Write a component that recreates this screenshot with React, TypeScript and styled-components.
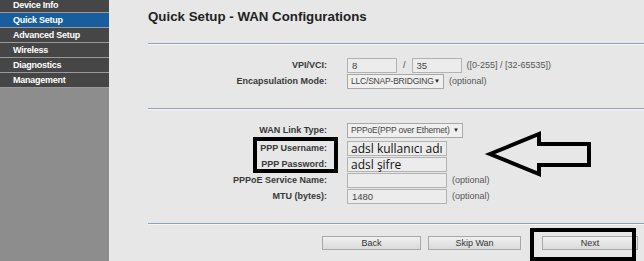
import React from "react";
import styled, { createGlobalStyle } from "styled-components";

const GlobalStyle = createGlobalStyle`
  html, body {
    margin: 0;
    padding: 0;
    background: #e7e7e7;
    font-family: "Liberation Sans", Arial, sans-serif;
  }
`;

const Page = styled.div`
  position: relative;
  display: flex;
  width: 644px;
  height: 261px;
  overflow: hidden;
`;

const Sidebar = styled.nav`
  width: 109px;
  flex-shrink: 0;
  background: #8d8d8d;
`;

const MenuList = styled.div`
  margin-top: -2px;
  display: flex;
  flex-direction: column;
`;

const MenuItem = styled.div<{ $active?: boolean }>`
  height: 14px;
  line-height: 14px;
  padding-left: 13px;
  border-bottom: 1px solid #9b9b9b;
  background: ${(p) => (p.$active ? "#185e9e" : "#464646")};
  color: #ffffff;
  font-size: 9px;
  letter-spacing: -0.25px;
  font-weight: bold;
  white-space: nowrap;
`;

const Main = styled.main`
  flex: 1;
  padding-left: 39px;
`;

const Title = styled.h1`
  margin: 0;
  padding-top: 9px;
  font-size: 13.3px;
  line-height: 16px;
  font-weight: bold;
  color: #222;
`;

const Rule = styled.div<{ $top: number }>`
  margin-top: ${(p) => p.$top}px;
  height: 1px;
  background: #8fa3b7;
  border-bottom: 1px solid #f6f6f6;
`;

const Section = styled.div`
  padding-top: 12px;
  display: grid;
  grid-template-columns: 179px auto;
  column-gap: 20px;
`;

const Label = styled.div<{ $after?: number }>`
  height: 16px;
  margin-bottom: ${(p) => p.$after || 0}px;
  display: flex;
  align-items: center;
  justify-content: flex-end;
  font-size: 9px;
  font-weight: bold;
  color: #383838;
  white-space: nowrap;
`;

const Control = styled.div<{ $after?: number }>`
  height: 16px;
  margin-bottom: ${(p) => p.$after || 0}px;
  display: flex;
  align-items: center;
  gap: 5px;
  font-size: 9px;
  color: #555;
  white-space: nowrap;
`;

const Field = styled.div<{ $w: number; $big?: boolean }>`
  box-sizing: border-box;
  width: ${(p) => p.$w}px;
  height: 15px;
  padding-left: ${(p) => (p.$big ? 3 : 4)}px;
  border: 1px solid #b2b2b2;
  background: #ececec;
  display: flex;
  align-items: center;
  line-height: 13px;
  font-family: ${(p) =>
    p.$big ? '"Open Sans", "DejaVu Sans", sans-serif' : '"Liberation Sans", Arial, sans-serif'};
  font-size: ${(p) => (p.$big ? "12px" : "9.5px")};
  color: ${(p) => (p.$big ? "#111" : "#444")};
`;

const Select = styled(Field)`
  justify-content: space-between;
  padding-left: 3px;
  padding-right: 3px;
  font-size: 8.5px;
  letter-spacing: -0.2px;
  border-color: #a8a8a8;
  background: #efefef;
`;

const Caret = styled.span`
  flex-shrink: 0;
  font-size: 6px;
  letter-spacing: 0;
  color: #222;
`;

const Slash = styled.span`
  color: #444;
  margin: 0 1px;
`;

const Buttons = styled.div`
  padding-top: 11px;
  padding-left: 174px;
  display: flex;
  gap: 7px;
`;

const Button = styled.button<{ $w: number }>`
  box-sizing: border-box;
  width: ${(p) => p.$w}px;
  height: 14px;
  padding: 0;
  border: 1px solid #a9a9a9;
  background: linear-gradient(#f0f0f0, #dadada);
  font-family: "Liberation Sans", Arial, sans-serif;
  font-size: 9px;
  color: #333;
`;

const NextSpacer = styled.div`
  width: 7px;
`;

const Frame = styled.div<{ $x: number; $y: number; $w: number; $h: number }>`
  position: absolute;
  left: ${(p) => p.$x}px;
  top: ${(p) => p.$y}px;
  width: ${(p) => p.$w}px;
  height: ${(p) => p.$h}px;
  box-sizing: border-box;
  border: 4px solid #000;
  pointer-events: none;
`;

const Arrow = styled.svg`
  position: absolute;
  left: 484px;
  top: 130px;
  pointer-events: none;
`;

const menu = ["Device Info", "Quick Setup", "Advanced Setup", "Wireless", "Diagnostics", "Management"];

export default function App() {
  return (
    <Page>
      <GlobalStyle />
      <Sidebar>
        <MenuList>
          {menu.map((m) => (
            <MenuItem key={m} $active={m === "Quick Setup"}>
              {m}
            </MenuItem>
          ))}
        </MenuList>
      </Sidebar>
      <Main>
        <Title>Quick Setup - WAN Configurations</Title>
        <Rule $top={18} />
        <Section>
          <Label>VPI/VCI:</Label>
          <Control>
            <Field $w={50}>8</Field>
            <Slash>/</Slash>
            <Field $w={50}>35</Field>
            <span>([0-255] / [32-65535])</span>
          </Control>
          <Label>Encapsulation Mode:</Label>
          <Control>
            <Select $w={97}>
              <span>LLC/SNAP-BRIDGING</span>
              <Caret>▼</Caret>
            </Select>
            <span>(optional)</span>
          </Control>
        </Section>
        <Rule $top={19} />
        <Section>
          <Label $after={2}>WAN Link Type:</Label>
          <Control $after={2}>
            <Select $w={116}>
              <span>PPPoE(PPP over Ethernet)</span>
              <Caret>▼</Caret>
            </Select>
          </Control>
          <Label>PPP Username:</Label>
          <Control>
            <Field $w={100} $big>
              adsl kullanıcı adı
            </Field>
          </Control>
          <Label>PPP Password:</Label>
          <Control>
            <Field $w={100} $big>
              adsl şifre
            </Field>
          </Control>
          <Label>PPPoE Service Name:</Label>
          <Control>
            <Field $w={100} />
            <span>(optional)</span>
          </Control>
          <Label>MTU (bytes):</Label>
          <Control>
            <Field $w={100}>1480</Field>
            <span>(optional)</span>
          </Control>
        </Section>
        <Rule $top={19} />
        <Buttons>
          <Button $w={99}>Back</Button>
          <Button $w={93}>Skip Wan</Button>
          <NextSpacer />
          <Button $w={96}>Next</Button>
        </Buttons>
      </Main>

      <Frame $x={253} $y={137} $w={85} $h={36} />
      <Frame $x={530} $y={228} $w={106} $h={33} />
      <Arrow width="110" height="50" viewBox="484 130 110 50">
        <polygon
          points="490,154 539,134 539,144 589,144 589,165 539,165 539,174"
          fill="none"
          stroke="#000"
          strokeWidth="4"
          strokeLinejoin="miter"
        />
      </Arrow>
    </Page>
  );
}
